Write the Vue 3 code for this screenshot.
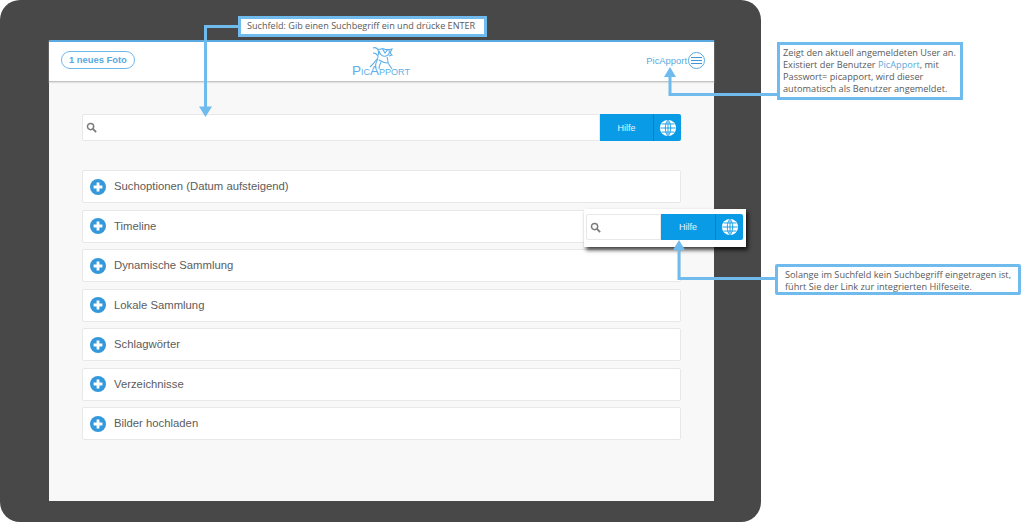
<script setup>
const rows = [
  "Suchoptionen (Datum aufsteigend)",
  "Timeline",
  "Dynamische Sammlung",
  "Lokale Sammlung",
  "Schlagwörter",
  "Verzeichnisse",
  "Bilder hochladen",
];
const meridians = [
  "M10 1.5C6 4 6 16 10 18.5",
  "M10 1.5C14 4 14 16 10 18.5",
  "M10 1.5V18.5",
  "M1.500 10H18.500",
  "M3 5.500H17",
  "M3 14.500H17",
];
</script>

<template>
  <div class="page">
    <div class="tablet">
      <div class="screen">
        <header class="topbar">
          <div class="topbar-side">
            <span class="new-photo">1 neues Foto</span>
          </div>
          <div class="logo">
            <svg class="logo-mark" viewBox="0 0 24 28" width="24" height="28" aria-hidden="true">
              <g fill="none" stroke="#5eb0e8" stroke-width="1.100">
                <path d="M4 2c2-1 4 0 5 2s0 4 1 5" />
                <path d="M9 3c2 1 4-1 6 0s4 1 8 0l-2 4 2 2-3 1" />
                <path d="M10 5c1 4 4 6 7 5s4-3 3-6" />
                <path d="M13 2l3 5 3-4" />
                <path d="M4 7c2 0 4 1 5 3s-3 5-5 8l-3 3" />
                <path d="M9 13c-2 3-3 6-2 9" />
                <path d="M10 14c3 2 7 3 9 3l4 6" />
                <path d="M18 11c1 2 1 4 1 6" />
                <path d="M12 16c-1 2-2 4-2 7" />
              </g>
            </svg>
            <div class="logo-name">PicApport</div>
          </div>
          <div class="topbar-side user">
            <span>PicApport</span>
            <span class="menu-btn"><i></i><i></i><i></i></span>
          </div>
        </header>

        <main class="content">
          <div class="search">
            <div class="search-field">
              <svg class="loupe" viewBox="0 0 12 12" width="11" height="11" aria-hidden="true">
                <circle cx="5" cy="5" r="3.400" fill="none" stroke="#7b7b7b" stroke-width="1.600" />
                <path d="M7.600 7.600L11 11" stroke="#7b7b7b" stroke-width="2" />
              </svg>
            </div>
            <div class="help-btn">
              <span class="help-label">Hilfe</span>
              <span class="help-globe">
                <svg viewBox="0 0 20 20" width="18" height="18" aria-hidden="true">
                  <circle cx="10" cy="10" r="9" fill="#fff" />
                  <path v-for="d in meridians" :key="d" :d="d" fill="none" stroke="#0a9be6" stroke-width="1" />
                </svg>
              </span>
            </div>
          </div>

          <div class="rows">
            <div v-for="row in rows" :key="row" class="row">
              <svg class="plus" viewBox="0 0 16 16" width="16" height="16" aria-hidden="true">
                <circle cx="8" cy="8" r="8" fill="#3498db" />
                <path d="M8 3.600V12.400M3.600 8H12.400" stroke="#fff" stroke-width="2.800" />
              </svg>
              <span class="row-label">{{ row }}</span>
            </div>
          </div>
        </main>
      </div>
    </div>

    <!-- Ausschnitt Hilfe-Button -->
    <div class="popout">
      <div class="search-field">
        <svg class="loupe" viewBox="0 0 12 12" width="11" height="11" aria-hidden="true">
          <circle cx="5" cy="5" r="3.400" fill="none" stroke="#7b7b7b" stroke-width="1.600" />
          <path d="M7.600 7.600L11 11" stroke="#7b7b7b" stroke-width="2" />
        </svg>
      </div>
      <div class="help-btn">
        <span class="help-label">Hilfe</span>
        <span class="help-globe">
          <svg viewBox="0 0 20 20" width="18" height="18" aria-hidden="true">
            <circle cx="10" cy="10" r="9" fill="#fff" />
            <path v-for="d in meridians" :key="d" :d="d" fill="none" stroke="#0a9be6" stroke-width="1" />
          </svg>
        </span>
      </div>
    </div>

    <svg class="arrows" viewBox="0 0 1024 523" width="1024" height="523" aria-hidden="true">
      <g fill="none" stroke="#6fbbee" stroke-width="3">
        <path d="M240 26.500H205.500V108" />
        <path d="M779 94.500H670V76" />
        <path d="M777 278.500H679V249" />
      </g>
      <g fill="#6fbbee">
        <path d="M199 106.500H212L205.500 117Z" />
        <path d="M664 77H676L670 67Z" />
        <path d="M673 250H685L679 240Z" />
      </g>
    </svg>

    <div class="note note-search">Suchfeld: Gib einen Suchbegriff ein und drücke ENTER</div>
    <div class="note note-user">
      Zeigt den aktuell angemeldeten User an.<br />
      Existiert der Benutzer <span class="note-link">PicApport</span>, mit<br />
      Passwort= picapport, wird dieser<br />
      automatisch als Benutzer angemeldet.
    </div>
    <div class="note note-help">
      Solange im Suchfeld kein Suchbegriff eingetragen ist,<br />
      führt Sie der Link zur integrierten Hilfeseite.
    </div>
  </div>
</template>

<style scoped>
.page {
  position: relative;
  width: 1024px;
  height: 523px;
  overflow: hidden;
  background: #fff;
  font-family: "Liberation Sans", Arial, sans-serif;
}

.tablet {
  box-sizing: border-box;
  width: 761px;
  height: 522px;
  padding: 40px 47px 21px 49px;
  background: #484848;
  border-radius: 20px;
}

.screen {
  display: flex;
  flex-direction: column;
  height: 100%;
  background: #f8f8f8;
}

.topbar {
  box-sizing: border-box;
  display: flex;
  align-items: center;
  justify-content: space-between;
  height: 42px;
  padding: 0 9px 3px 12px;
  background: #fff;
  border-top: 2px solid #5aa9e0;
  border-bottom: 1px solid #c4c4c4;
  box-shadow: 0 1px 1px #e2e2e2;
}

.topbar-side {
  display: flex;
  align-items: center;
  width: 200px;
}

.new-photo {
  box-sizing: border-box;
  height: 18px;
  padding: 0 7px;
  border: 1px solid #6fb8ea;
  border-radius: 9px;
  color: #5aa9e0;
  font-size: 9.400px;
  font-weight: 700;
  line-height: 16px;
}

.logo {
  display: flex;
  flex-direction: column;
  align-items: center;
  width: 62px;
  margin-top: 3px;
  margin-right: 4px;
}

.logo-mark {
  display: block;
  margin-bottom: -9px;
}

.logo-name {
  color: #5eb0e8;
  font-size: 13.500px;
  font-variant: small-caps;
  line-height: 12px;
  white-space: nowrap;
}

.user {
  justify-content: flex-end;
  gap: 1px;
  color: #5aa9e0;
  font-size: 9.400px;
}

.menu-btn {
  box-sizing: border-box;
  display: flex;
  flex-direction: column;
  align-items: center;
  justify-content: center;
  gap: 2px;
  width: 17px;
  height: 17px;
  border: 1px solid #5aa9e0;
  border-radius: 50%;
}

.menu-btn i {
  display: block;
  width: 11px;
  height: 1px;
  background: #3f97d6;
}

.content {
  padding: 32px 33px 0;
}

.search {
  display: flex;
  height: 27px;
}

.search-field {
  box-sizing: border-box;
  display: flex;
  flex: 1;
  align-items: center;
  padding-left: 3px;
  background: #fff;
  border: 1px solid #e8e8e8;
  border-radius: 2px 0 0 2px;
}

.help-btn {
  display: flex;
  width: 81px;
  background: #0a9be6;
  border-radius: 0 2px 2px 0;
  color: #e8f5fd;
  font-size: 9px;
}

.help-label {
  display: flex;
  flex: 1;
  align-items: center;
  justify-content: center;
}

.help-globe {
  display: flex;
  align-items: center;
  justify-content: center;
  width: 27px;
  border-left: 1px solid #0b7fc4;
}

.rows {
  display: flex;
  flex-direction: column;
  gap: 6.500px;
  margin-top: 29px;
}

.row {
  box-sizing: border-box;
  display: flex;
  align-items: center;
  gap: 8px;
  height: 33px;
  padding-left: 7px;
  background: #fff;
  border: 1px solid #e8e8e8;
  border-radius: 2px;
  color: #5c5c5c;
  font-size: 11.300px;
}

.row-label {
  margin-top: -1px;
}

.popout {
  position: absolute;
  top: 209px;
  left: 584px;
  box-sizing: border-box;
  display: flex;
  width: 162px;
  height: 38px;
  padding: 5px 3px 7px 2px;
  background: #fff;
  box-shadow: 2px 3px 4px rgba(0, 0, 0, 0.75);
}

.popout .help-btn {
  width: 82px;
}

.arrows {
  position: absolute;
  top: 0;
  left: 0;
}

.note {
  position: absolute;
  box-sizing: border-box;
  background: #fff;
  border: 3px solid #6fbbee;
  color: #5a5a5a;
  font-family: "Open Sans", sans-serif;
  font-size: 9.200px;
  line-height: 12px;
}

.note-search {
  top: 16px;
  left: 238px;
  width: 249px;
  height: 21px;
  padding: 1px 0 0 6px;
  font-size: 9.100px;
  white-space: nowrap;
}

.note-user {
  top: 42px;
  left: 777px;
  width: 186px;
  height: 58px;
  padding: 2px 0 0 3px;
}

.note-help {
  top: 264px;
  left: 775px;
  width: 246px;
  height: 31px;
  padding: 2px 0 0 7px;
  border-radius: 2px;
}

.note-link {
  color: #5aa9e0;
}
</style>

<style>
html,
body {
  margin: 0;
  background: #fff;
}
</style>
